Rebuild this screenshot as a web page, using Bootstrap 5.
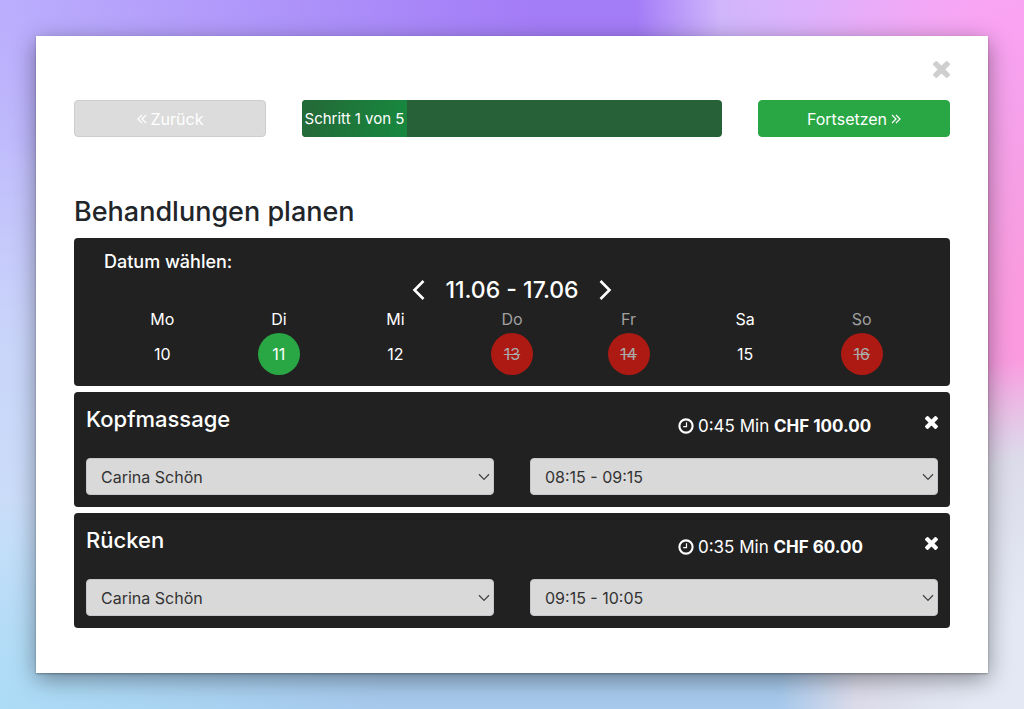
<!DOCTYPE html>
<html lang="de">
<head>
<meta charset="utf-8">
<meta name="viewport" content="width=device-width, initial-scale=1">
<title>Behandlungen planen</title>
<link href="https://cdn.jsdelivr.net/npm/bootstrap@5.3.0/dist/css/bootstrap.min.css" rel="stylesheet">
<style>
body {
  font-family: Inter, "Liberation Sans", sans-serif;
  font-size: 16px;
  line-height: 24px;
  color: #212529;
  background:
    radial-gradient(ellipse 27% 50% at 103% 100%, #e3e8f4 30%, #dcdbea 72%, transparent 100%),
    radial-gradient(ellipse 35% 62% at 104% 46%, #fb9ade 15%, transparent 100%),
    radial-gradient(ellipse 38% 60% at 100% 0, #f8a8fc 10%, #d0b6fb 78%, transparent 100%),
    radial-gradient(ellipse 70% 45% at 62% 0, #a37cf7 15%, transparent 100%),
    radial-gradient(ellipse 70% 40% at 58% 100%, #a6c9ec 30%, transparent 100%),
    linear-gradient(to bottom, #bfb6fe 0%, #c0bcfc 20%, #c9d3fa 45%, #cadcf8 70%, #afe2fa 98%);
}
.page-pad { padding: 36px; }
.dialog-box { padding: 20px 38px 45px; box-shadow: 0 6px 22px rgba(0,0,0,.4), 0 1px 2px rgba(0,0,0,.3); }
.row { --bs-gutter-x: 36px; }
.close-bar { height: 44px; padding-top: 4px; }
.icon-btn { line-height: 1; color: #fff; }
.icon-btn.dismiss { color: #cfcfcf; }
.bar-btn { height: 37px; padding: 0; font-size: 16px; border-radius: 4px; color: #fff; }
.bar-btn.back { background: #dcdcdc; border-color: #cdcdcd; }
.bar-btn.next, .bar-btn.next:hover { background: #29a745; border-color: #29a745; color: #fff; }
.steps { height: 37px; border-radius: 4px; background: #276138; font-size: 15px; }
.steps .progress-bar { background: linear-gradient(100deg, #236b38 10%, #18863e 90%); }
h1 { font-size: 27px; line-height: 32px; font-weight: 500; margin: 59px 0 10px; }
.panels { gap: 6px; }
.panel { background: #212121; color: #fff; border-radius: 4px; }
.date-panel { padding: 12px 30px 11px; }
.date-panel h2 { font-size: 18px; line-height: 24px; font-weight: 500; }
.range { font-size: 23px; line-height: 32px; font-weight: 500; }
.week { table-layout: fixed; font-size: 16px; text-align: center; }
.week th { font-weight: 400; line-height: 27px; padding: 0; }
.week td { padding: 0; }
.day { width: 42px; height: 42px; padding: 0; color: #fff; font-size: 16px; }
.day.chosen { background: #29a745; }
.day:disabled { background: #ad1a14; color: #aaa; text-decoration: line-through; opacity: 1; border: 0; }
.off { color: #a0a0a0; }
.treatment { padding: 12px; }
.treatment-head { height: 54px; }
.treatment h3 { font-size: 22px; line-height: 30px; font-weight: 500; }
.facts { padding-top: 10px; font-size: 17px; }
.form-select {
  height: 37px; padding: 0 36px 0 14px; font-size: 16px; color: #333;
  border-radius: 4px; border-color: #c4c8cc; background-color: #d9d9d9;
  background-image: url("data:image/svg+xml,%3Csvg xmlns='http://www.w3.org/2000/svg' viewBox='0 0 12 8'%3E%3Cpath d='M1 1.2 6 6.4 11 1.2' fill='none' stroke='%23444' stroke-width='1.3'/%3E%3C/svg%3E");
  background-size: 12px 8px; background-position: right 3px center;
}
</style>
</head>
<body class="min-vh-100">
<svg class="d-none" xmlns="http://www.w3.org/2000/svg">
  <symbol id="cross" viewBox="110 366 1188 1188"><path fill="currentColor" d="M1298 1322q0 40-28 68l-136 136q-28 28-68 28t-68-28L704 1232l-294 294q-28 28-68 28t-68-28l-136-136q-28-28-28-68t28-68l294-294-294-294q-28-28-28-68t28-68l136-136q28-28 68-28t68 28l294 294 294-294q28-28 68-28t68 28l136 136q28 28 28 68t-28 68l-294 294 294 294q28 28 28 68z"/></symbol>
  <symbol id="clock" viewBox="0 0 16 16"><g fill="none" stroke="currentColor"><circle cx="8" cy="8" r="6.6" stroke-width="2.1"/><path d="M8.5 4.3V8.7H5.2" stroke-width="1.2"/></g></symbol>
  <symbol id="angles" viewBox="0 0 10 10"><path fill="none" stroke="currentColor" stroke-width="1.2" d="M1 1 5 5 1 9M5 1 9 5 5 9"/></symbol>
  <symbol id="angles-left" viewBox="0 0 10 10"><path fill="none" stroke="currentColor" stroke-width="1.2" d="M9 1 5 5 9 9M5 1 1 5 5 9"/></symbol>
</svg>
<div class="page-pad">
  <main class="dialog-box bg-white">
    <div class="close-bar d-flex justify-content-end align-items-start">
      <button type="button" class="icon-btn dismiss btn p-0 border-0" aria-label="Schliessen"><svg width="17" height="17"><use href="#cross"/></svg></button>
    </div>
    <div class="row">
      <div class="col-3"><button type="button" class="bar-btn back btn w-100 d-flex justify-content-center align-items-center gap-1"><svg width="10" height="10"><use href="#angles-left"/></svg>Zurück</button></div>
      <div class="col-6">
        <div class="steps progress" role="progressbar" aria-valuenow="1" aria-valuemin="0" aria-valuemax="5" aria-label="Fortschritt">
          <div class="progress-bar w-25">Schritt 1 von 5</div>
        </div>
      </div>
      <div class="col-3"><button type="button" class="bar-btn next btn w-100 d-flex justify-content-center align-items-center gap-1">Fortsetzen<svg width="10" height="10"><use href="#angles"/></svg></button></div>
    </div>
    <h1>Behandlungen planen</h1>
    <div class="panels d-flex flex-column">
      <section class="panel date-panel">
        <h2 class="mb-0">Datum wählen:</h2>
        <div class="range d-flex justify-content-center align-items-center gap-3">
          <button type="button" class="icon-btn btn d-flex p-0 border-0" aria-label="Vorherige Woche"><svg width="20" height="24" viewBox="0 0 20 24" fill="none" stroke="currentColor" stroke-width="2.6"><path d="M14.5 3 5.5 12l9 9"/></svg></button>
          <span>11.06 - 17.06</span>
          <button type="button" class="icon-btn btn d-flex p-0 border-0" aria-label="Nächste Woche"><svg width="20" height="24" viewBox="0 0 20 24" fill="none" stroke="currentColor" stroke-width="2.6"><path d="M5.5 3l9 9-9 9"/></svg></button>
        </div>
        <table class="week w-100">
          <thead><tr><th>Mo</th><th>Di</th><th>Mi</th><th class="off">Do</th><th class="off">Fr</th><th>Sa</th><th class="off">So</th></tr></thead>
          <tbody><tr>
            <td><button type="button" class="day btn rounded-circle border-0">10</button></td>
            <td><button type="button" class="day chosen btn rounded-circle border-0">11</button></td>
            <td><button type="button" class="day btn rounded-circle border-0">12</button></td>
            <td><button type="button" class="day btn rounded-circle" disabled>13</button></td>
            <td><button type="button" class="day btn rounded-circle" disabled>14</button></td>
            <td><button type="button" class="day btn rounded-circle border-0">15</button></td>
            <td><button type="button" class="day btn rounded-circle" disabled>16</button></td>
          </tr></tbody>
        </table>
      </section>
      <section class="panel treatment">
        <div class="treatment-head row">
          <div class="col-8"><h3 class="mb-0">Kopfmassage</h3></div>
          <div class="col-3 pe-0"><div class="facts d-flex align-items-center gap-1 text-nowrap"><svg width="16" height="16"><use href="#clock"/></svg><span>0:45 Min <strong>CHF 100.00</strong></span></div></div>
          <div class="col-1 d-flex justify-content-end align-items-start pt-2"><button type="button" class="icon-btn btn d-flex p-1 pe-0 border-0" aria-label="Entfernen"><svg width="13" height="13"><use href="#cross"/></svg></button></div>
        </div>
        <div class="row">
          <div class="col-6"><select class="form-select" aria-label="Mitarbeiter"><option>Carina Schön</option></select></div>
          <div class="col-6"><select class="form-select" aria-label="Zeit"><option>08:15 - 09:15</option></select></div>
        </div>
      </section>
      <section class="panel treatment">
        <div class="treatment-head row">
          <div class="col-8"><h3 class="mb-0">Rücken</h3></div>
          <div class="col-3 pe-0"><div class="facts d-flex align-items-center gap-1 text-nowrap"><svg width="16" height="16"><use href="#clock"/></svg><span>0:35 Min <strong>CHF 60.00</strong></span></div></div>
          <div class="col-1 d-flex justify-content-end align-items-start pt-2"><button type="button" class="icon-btn btn d-flex p-1 pe-0 border-0" aria-label="Entfernen"><svg width="13" height="13"><use href="#cross"/></svg></button></div>
        </div>
        <div class="row">
          <div class="col-6"><select class="form-select" aria-label="Mitarbeiter"><option>Carina Schön</option></select></div>
          <div class="col-6"><select class="form-select" aria-label="Zeit"><option>09:15 - 10:05</option></select></div>
        </div>
      </section>
    </div>
  </main>
</div>
<script src="https://cdn.jsdelivr.net/npm/bootstrap@5.3.0/dist/js/bootstrap.bundle.min.js"></script>
</body>
</html>
